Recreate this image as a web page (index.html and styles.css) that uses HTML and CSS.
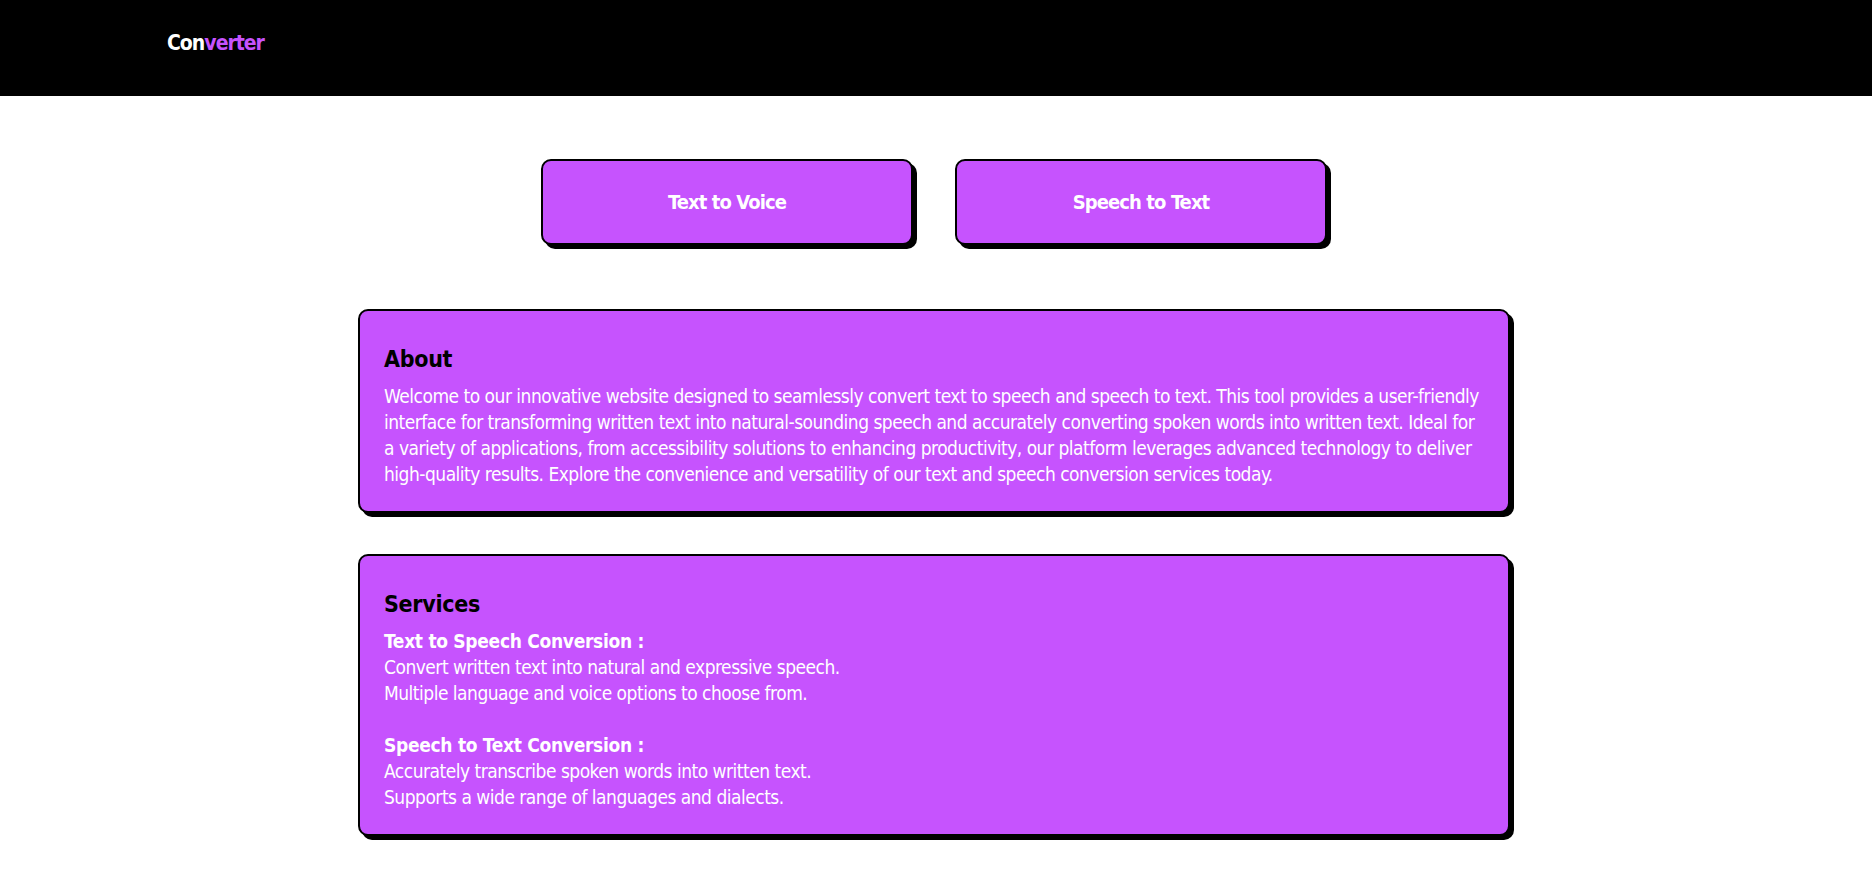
FILE: index.html
```html
<!DOCTYPE html>
<html lang="en">
<head>
<meta charset="utf-8">
<title>Converter</title>
<link rel="stylesheet" href="styles.css">
</head>
<body>
<header class="topbar">
  <div class="logo">Con<span class="logo-accent">verter</span></div>
</header>
<main class="page">
  <nav class="actions">
    <a class="action-btn" href="#">Text to Voice</a>
    <a class="action-btn" href="#">Speech to Text</a>
  </nav>
  <section class="card">
    <h2 class="card-title">About</h2>
    <p class="card-text">Welcome to our innovative website designed to seamlessly convert text to speech and speech to text. This tool provides a user-friendly interface for transforming written text into natural-sounding speech and accurately converting spoken words into written text. Ideal for a variety of applications, from accessibility solutions to enhancing productivity, our platform leverages advanced technology to deliver high-quality results. Explore the convenience and versatility of our text and speech conversion services today.</p>
  </section>
  <section class="card">
    <h2 class="card-title">Services</h2>
    <div class="service">
      <div class="service-name">Text to Speech Conversion :</div>
      <div class="card-text">Convert written text into natural and expressive speech.</div>
      <div class="card-text">Multiple language and voice options to choose from.</div>
    </div>
    <div class="service">
      <div class="service-name">Speech to Text Conversion :</div>
      <div class="card-text">Accurately transcribe spoken words into written text.</div>
      <div class="card-text">Supports a wide range of languages and dialects.</div>
    </div>
  </section>
</main>
</body>
</html>
```
FILE: styles.css
```css
* { box-sizing: border-box; }
body {
  margin: 0;
  background: #ffffff;
  font-family: "DejaVu Sans Condensed", "DejaVu Sans", "Liberation Sans", sans-serif;
  font-stretch: condensed;
  color: #000;
}
.topbar {
  height: 96px;
  background: #000;
  padding: 30px 167px 0;
}
.logo {
  font-size: 21px;
  line-height: 26px;
  font-weight: 700;
  letter-spacing: -1px;
  color: #fff;
}
.logo-accent { color: #c653fe; }
.page {
  display: flex;
  flex-direction: column;
  align-items: center;
  padding: 63px 4px 28px 0;
}
.actions {
  display: flex;
  gap: 42px;
  margin-bottom: 64px;
}
.action-btn {
  width: 372px;
  height: 86px;
  display: flex;
  align-items: center;
  justify-content: center;
  background: #c653fe;
  border: 2px solid #000;
  border-radius: 10px;
  box-shadow: 4px 4px 0 #000;
  color: #fff;
  text-decoration: none;
  font-size: 20px;
  letter-spacing: -0.9px;
  font-weight: 700;
}
.card {
  width: 1152px;
  background: #c653fe;
  border: 2px solid #000;
  border-radius: 10px;
  box-shadow: 4px 4px 0 #000;
  padding: 33px 24px 24px;
}
.card + .card { margin-top: 41px; }
.card-title {
  margin: 0 0 9px;
  font-size: 23px;
  line-height: 30px;
  letter-spacing: -0.3px;
  font-weight: 700;
  color: #000;
}
.card-text {
  margin: 0;
  font-size: 19px;
  line-height: 26px;
  letter-spacing: -0.5px;
  color: #fff;
}
.service + .service { margin-top: 26px; }
.service-name {
  font-size: 19px;
  line-height: 26px;
  letter-spacing: -0.3px;
  font-weight: 700;
  color: #fff;
}
```
